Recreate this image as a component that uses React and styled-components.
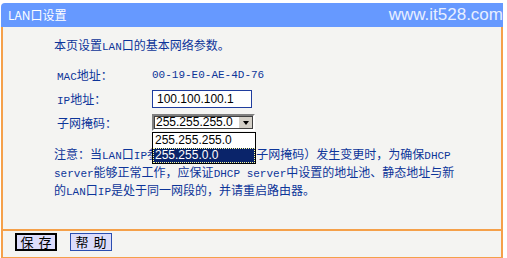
import styled, { createGlobalStyle } from "styled-components";

const GlobalStyle = createGlobalStyle`
  body {
    margin: 0;
    background: #ffffff;
    font-family: "Noto Sans CJK SC", "Liberation Sans", sans-serif;
  }
`;

const Frame = styled.div`
  width: 502px;
  margin: 3px 0 0 1px;
`;

const TitleBar = styled.div`
  height: 24px;
  background: #6699ff;
  border-top-left-radius: 4px;
  display: flex;
  align-items: center;
  justify-content: space-between;
  padding: 0 0 0 7px;
`;

const Title = styled.span`
  color: #ffffff;
  font-size: 12px;
  line-height: 24px;
`;

const Watermark = styled.span`
  color: #e8efff;
  font-family: "Liberation Sans", sans-serif;
  font-size: 17px;
  line-height: 24px;
`;

const Panel = styled.div`
  background: #f4f4f2;
  border: 2px solid #f5a04a;
  border-top: none;
`;

const Content = styled.div`
  height: 202px;
  padding: 9px 0 0 51px;
  box-sizing: border-box;
  color: #0d3599;
  font-size: 12px;
`;

const Intro = styled.div`
  height: 18px;
  line-height: 18px;
`;

const Form = styled.div`
  margin: 9px 0 0 3px;
  display: grid;
  grid-template-columns: 95px auto;
  grid-template-rows: 24px 24px 23px;
  align-items: center;
`;

const Label = styled.div`
  white-space: nowrap;
  line-height: 14px;
`;

const En = styled.span`
  font-family: "Liberation Mono", monospace;
  font-size: 11px;
  line-height: 1;
`;

const Value = styled.div`
  position: relative;
  font-family: "Liberation Mono", monospace;
  font-size: 11px;
  line-height: 14px;
`;

const TextBox = styled.div`
  width: 100px;
  height: 18px;
  box-sizing: border-box;
  border: 1px solid #1f3d9e;
  background: #ffffff;
  color: #000000;
  font-family: "Liberation Sans", sans-serif;
  font-size: 12px;
  line-height: 16px;
  padding-left: 4px;
`;

const Select = styled.div`
  width: 103px;
  height: 17px;
  box-sizing: border-box;
  border: 2px solid;
  border-color: #808080 #ffffff #ffffff #808080;
  outline: 1px solid #404040;
  outline-offset: -3px;
  background: #ffffff;
  display: flex;
  align-items: center;
  color: #000000;
  font-family: "Liberation Sans", sans-serif;
  font-size: 12px;
`;

const SelectText = styled.span`
  flex: 1;
  padding-left: 2px;
  line-height: 13px;
`;

const ArrowButton = styled.span`
  width: 15px;
  height: 13px;
  box-sizing: border-box;
  background: #d4d0c8;
  border: 1px solid;
  border-color: #ffffff #404040 #404040 #ffffff;
  display: flex;
  align-items: center;
  justify-content: center;
`;

const Arrow = styled.span`
  width: 0;
  height: 0;
  border-left: 3.5px solid transparent;
  border-right: 3.5px solid transparent;
  border-top: 4px solid #000000;
`;

const DropList = styled.div`
  position: absolute;
  left: 0;
  top: 18px;
  width: 104px;
  box-sizing: border-box;
  border: 1px solid #000000;
  background: #ffffff;
  z-index: 2;
  font-family: "Liberation Sans", sans-serif;
  font-size: 12px;
`;

const Option = styled.div`
  height: 15px;
  line-height: 15px;
  padding-left: 2px;
  color: ${(p) => (p.$active ? "#ffffff" : "#000000")};
  background: ${(p) => (p.$active ? "#0a246a" : "#ffffff")};
  outline: ${(p) => (p.$active ? "1px dotted #ffff99" : "none")};
  outline-offset: -1px;
`;

const Note = styled.div`
  margin-top: 11px;
  white-space: nowrap;
`;

const NoteLine = styled.div`
  height: 18px;
  line-height: 18px;
`;

const ButtonRow = styled.div`
  border-top: 2px solid #f5a04a;
  height: 24px;
  display: flex;
  align-items: flex-start;
  gap: 13px;
  padding: 2px 0 0 12px;
`;

const Button = styled.div`
  width: 42px;
  height: 18px;
  box-sizing: border-box;
  background: #dcdcfb;
  border: ${(p) => (p.$primary ? "2px solid #000000" : "1px solid #2a4db0")};
  display: flex;
  align-items: center;
  justify-content: center;
  gap: 5px;
  font-size: 13px;
  line-height: 14px;
  color: #000000;
  white-space: nowrap;
`;

export default function App() {
  return (
    <>
      <GlobalStyle />
      <Frame>
        <TitleBar>
          <Title>LAN口设置</Title>
          <Watermark>www.it528.com</Watermark>
        </TitleBar>
        <Panel>
          <Content>
            <Intro>
              本页设置<En>LAN</En>口的基本网络参数。
            </Intro>
            <Form>
              <Label>
                <En>MAC</En>地址：
              </Label>
              <Value>00-19-E0-AE-4D-76</Value>
              <Label>
                <En>IP</En>地址：
              </Label>
              <Value>
                <TextBox>100.100.100.1</TextBox>
              </Value>
              <Label>子网掩码：</Label>
              <Value>
                <Select>
                  <SelectText>255.255.255.0</SelectText>
                  <ArrowButton>
                    <Arrow />
                  </ArrowButton>
                </Select>
                <DropList>
                  <Option>255.255.255.0</Option>
                  <Option $active>255.255.0.0</Option>
                </DropList>
              </Value>
            </Form>
            <Note>
              <NoteLine>
                注意：当<En>LAN</En>口<En>IP</En>参数（包括<En>IP</En>地址和子网掩码）发生变更时，为确保<En>DHCP</En>
              </NoteLine>
              <NoteLine>
                <En>server</En>能够正常工作，应保证<En>DHCP server</En>中设置的地址池、静态地址与新
              </NoteLine>
              <NoteLine>
                的<En>LAN</En>口<En>IP</En>是处于同一网段的，并请重启路由器。
              </NoteLine>
            </Note>
          </Content>
          <ButtonRow>
            <Button $primary>
              <span>保</span>
              <span>存</span>
            </Button>
            <Button>
              <span>帮</span>
              <span>助</span>
            </Button>
          </ButtonRow>
        </Panel>
      </Frame>
    </>
  );
}
